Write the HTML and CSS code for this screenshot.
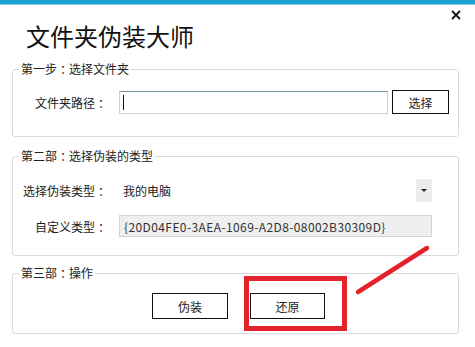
FILE: index.html
```html
<!DOCTYPE html>
<html lang="zh">
<head>
<meta charset="utf-8">
<link rel="stylesheet" href="styles.css">
</head>
<body>
<div class="window">
  <div class="topbar"></div>
  <div class="header">
    <h1 class="title">文件夹伪装大师</h1>
    <svg class="close" width="10" height="10" viewBox="0 0 10 10"><path d="M1 1L9 9M9 1L1 9" stroke="#111" stroke-width="1.8"/></svg>
  </div>

  <fieldset class="group g1">
    <legend>第一步<span class="colon">：</span>选择文件夹</legend>
    <div class="row">
      <label class="lbl">文件夹路径<span class="colon">：</span></label>
      <div class="input path"><span class="caret"></span></div>
      <button class="btn pick">选择</button>
    </div>
  </fieldset>

  <fieldset class="group g2">
    <legend>第二部<span class="colon">：</span>选择伪装的类型</legend>
    <div class="row">
      <label class="lbl">选择伪装类型<span class="colon">：</span></label>
      <div class="select"><span class="sel-val">我的电脑</span><span class="arrow"></span></div>
    </div>
    <div class="row r2">
      <label class="lbl">自定义类型<span class="colon">：</span></label>
      <div class="input ro">{20D04FE0-3AEA-1069-A2D8-08002B30309D}</div>
    </div>
  </fieldset>

  <fieldset class="group g3">
    <legend>第三部<span class="colon">：</span>操作</legend>
    <div class="actions">
      <button class="btn act">伪装</button>
      <button class="btn act act2">还原</button>
    </div>
  </fieldset>

  <svg class="mark" width="475" height="347" viewBox="0 0 475 347">
    <rect x="246.5" y="278.5" width="98" height="50" fill="none" stroke="#e4222b" stroke-width="5"/>
    <line x1="358" y1="292" x2="427" y2="248" stroke="#e4222b" stroke-width="4.5" stroke-linecap="round"/>
  </svg>
</div>
</body>
</html>
```

FILE: styles.css
```css
* { box-sizing: border-box; }
html, body { margin: 0; padding: 0; background: #fff; }
body {
  font-family: "Noto Sans CJK SC", "Noto Sans", sans-serif;
  font-size: 12px;
  color: #222;
}
.window {
  position: relative;
  width: 475px;
  height: 347px;
  overflow: hidden;
  background: #fff;
}
.topbar {
  height: 5px;
  background: #1b9fd3;
  border-bottom: 1px solid #8fd0ea;
}
.header {
  position: relative;
  height: 56px;
  padding-top: 19px;
  padding-left: 26px;
}
.title {
  margin: 0;
  font-size: 24px;
  line-height: 24px;
  font-weight: 400;
  color: #111;
}
.close {
  position: absolute;
  right: 14px;
  top: 5px;
}
.colon {
  font-feature-settings: "palt" 1;
  padding: 0 3px;
}
.group {
  margin: 0 16px 0 12px;
  padding: 0;
  border: 1px solid #dadada;
  border-radius: 3px;
}
.group legend {
  margin-left: 6px;
  padding: 0 2px;
  font-size: 12px;
  line-height: 16px;
  color: #222;
}
.row {
  display: flex;
  align-items: center;
}
.lbl {
  width: 94px;
  text-align: right;
  margin-right: 12px;
  white-space: nowrap;
}
.g1 .row { margin-top: 13px; padding-bottom: 22px; }
.input {
  height: 23px;
  border: 1px solid #c7d4dc;
  border-top-color: #7d97a5;
  background: #fff;
  display: flex;
  align-items: center;
  padding-left: 3px;
}
.path { width: 269px; }
.caret {
  width: 1px;
  height: 15px;
  background: #111;
}
.btn {
  font-family: inherit;
  font-size: 12px;
  color: #222;
  background: #fff;
  border: 1px solid #111;
  border-radius: 0;
  padding: 0;
}
.pick {
  width: 57px;
  height: 24px;
  margin-left: 4px;
}
.g2 { margin-top: 11px; }
.g2 .row { margin-top: 15px; }
.select {
  width: 313px;
  height: 23px;
  display: flex;
  align-items: center;
  justify-content: space-between;
  padding-left: 4px;
}
.arrow {
  width: 16px;
  height: 23px;
  background: #ececec;
  position: relative;
}
.arrow::after {
  content: "";
  position: absolute;
  left: 5px;
  top: 10px;
  border-left: 3px solid transparent;
  border-right: 3px solid transparent;
  border-top: 3px solid #222;
}
.g2 .r2 { margin-top: 13px; padding-bottom: 18px; }
.ro {
  width: 313px;
  height: 22px;
  background: #efefef;
  border: 1px solid #d3d3d3;
  color: #333;
  padding-left: 4px;
  letter-spacing: 0.4px;
  white-space: nowrap;
}
.g3 { margin-top: 9px; }
.actions {
  display: flex;
  padding-left: 139px;
  margin-top: 12px;
  padding-bottom: 14px;
  gap: 22px;
}
.act {
  width: 76px;
  height: 26px;
}
.act2 { width: 75px; }
.mark {
  position: absolute;
  left: 0;
  top: 0;
  pointer-events: none;
}
```
